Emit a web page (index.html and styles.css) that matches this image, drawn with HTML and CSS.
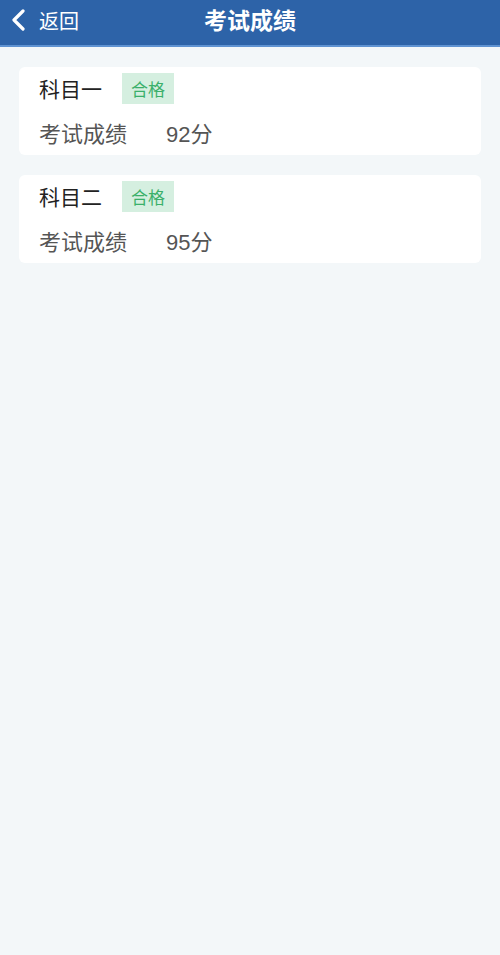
FILE: index.html
```html
<!doctype html>
<html>
<head>
<meta charset="utf-8">
<title>考试成绩</title>
<link rel="stylesheet" href="styles.css">
</head>

<body>
<div class="header">
	<a href="javascript:;" class="back">
		<svg class="back-icon" width="16" height="22" viewBox="0 0 16 22"><path d="M13 2 L4 11 L13 20" fill="none" stroke="#fff" stroke-width="3.2" stroke-linecap="round" stroke-linejoin="round"/></svg>
		<span>返回</span>
	</a>
	<h1>考试成绩</h1>
</div>
<div class="list">
	<div class="card">
		<div class="card-top">
			<span class="subject">科目一</span>
			<span class="tag">合格</span>
		</div>
		<div class="card-row">
			<span class="label">考试成绩</span>
			<span class="score">92分</span>
		</div>
	</div>
	<div class="card">
		<div class="card-top">
			<span class="subject">科目二</span>
			<span class="tag">合格</span>
		</div>
		<div class="card-row">
			<span class="label">考试成绩</span>
			<span class="score">95分</span>
		</div>
	</div>
</div>
</body>
</html>
```

FILE: styles.css
```css
*{margin:0; padding:0; list-style:none; text-decoration:none; box-sizing:border-box;}
html,body{height:100%;}
body{background:#f3f7f9; font-family:"Noto Sans CJK SC","Liberation Sans",sans-serif;}
.header{height:47px; background:#2d63a8; border-bottom:2px solid #5f93d2; position:relative; display:flex; align-items:center; justify-content:center;}
.header h1{font-size:23px; font-weight:bold; color:#fff; line-height:1; margin-top:-7px;}
.back{position:absolute; left:10px; top:9px; display:flex; align-items:center; color:#fff; font-size:20px; line-height:1;}
.back-icon{display:block;}
.back span{margin-left:13px; margin-top:1px;}
.list{padding:20px 19px 0; display:flex; flex-direction:column; gap:20px;}
.card{background:#fff; border-radius:6px; padding:6px 20px 8px;}
.card-top{display:flex; align-items:center; height:31px;}
.subject{font-size:21px; color:#222; line-height:1;}
.tag{margin-left:20px; width:52px; height:31px; background:#d5efe0; color:#3ab06a; font-size:17px; line-height:31px; text-align:center;}
.card-row{display:flex; align-items:baseline; margin-top:13px; height:30px; font-size:22px; line-height:30px; color:#555;}
.label{width:127px;}
.score{font-family:"Liberation Sans","Noto Sans CJK SC",sans-serif;}
```
